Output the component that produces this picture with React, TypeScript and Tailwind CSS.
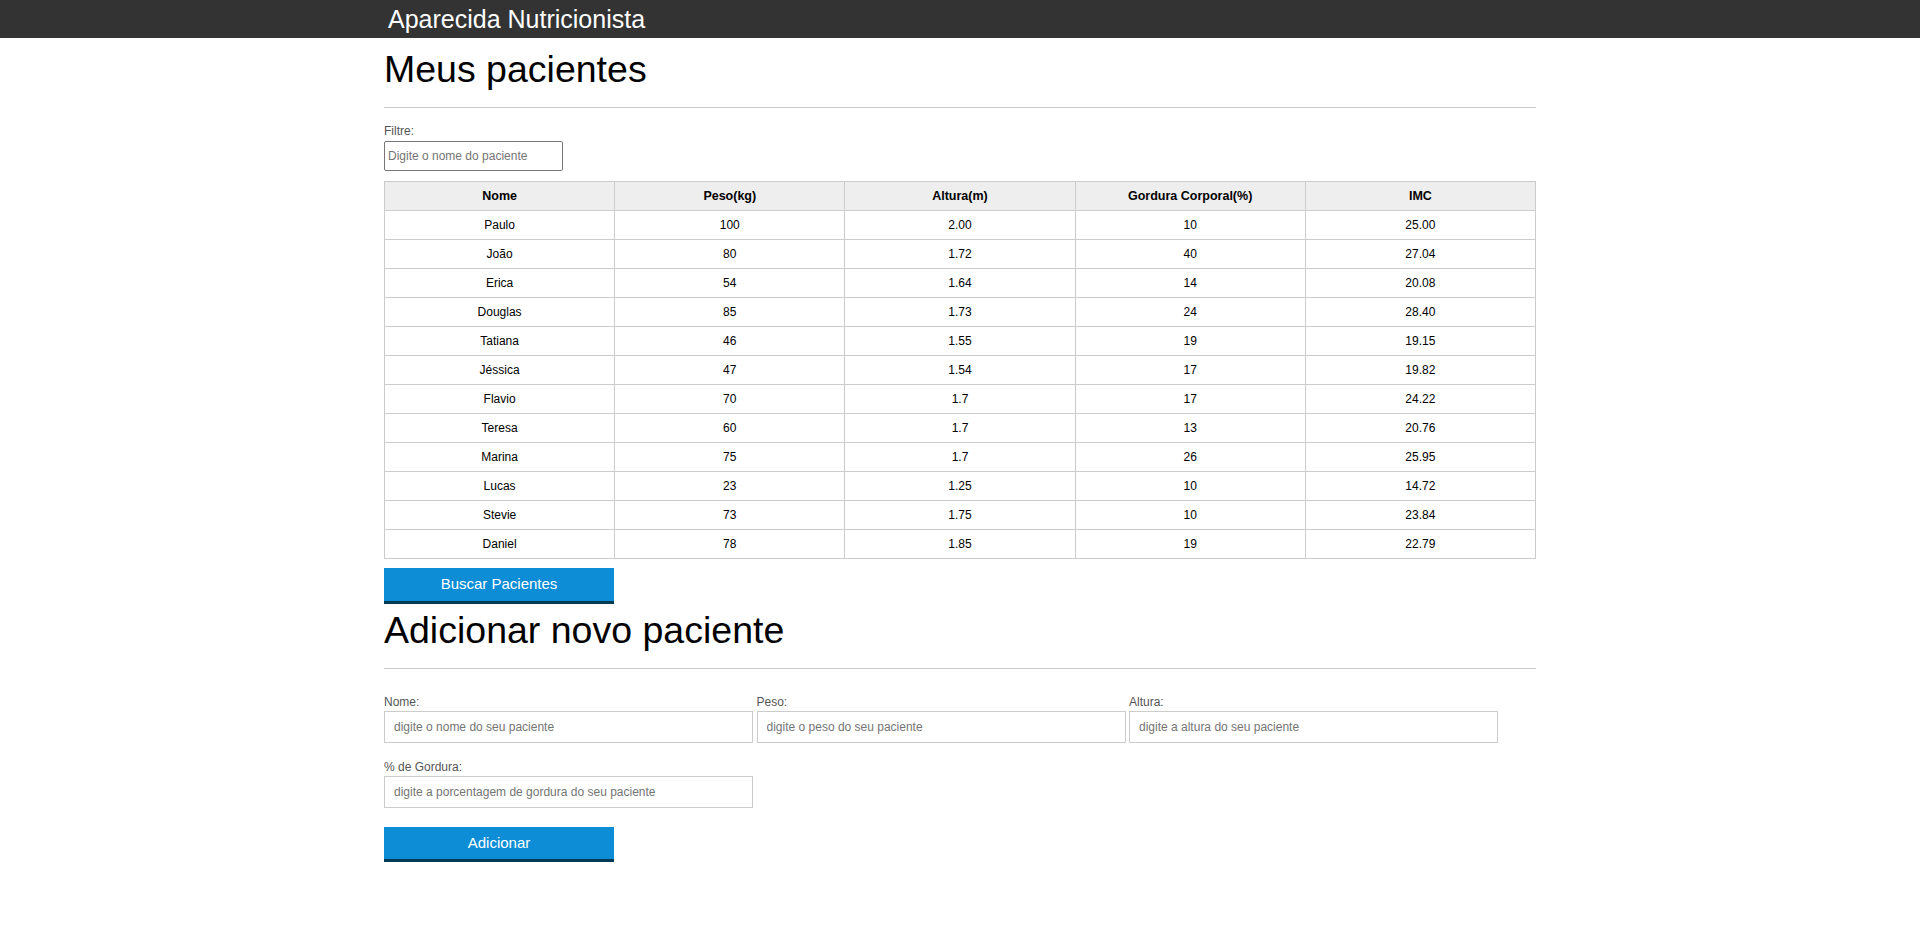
import React from "react";

const pacientes = [
  ["Paulo", "100", "2.00", "10", "25.00"],
  ["João", "80", "1.72", "40", "27.04"],
  ["Erica", "54", "1.64", "14", "20.08"],
  ["Douglas", "85", "1.73", "24", "28.40"],
  ["Tatiana", "46", "1.55", "19", "19.15"],
  ["Jéssica", "47", "1.54", "17", "19.82"],
  ["Flavio", "70", "1.7", "17", "24.22"],
  ["Teresa", "60", "1.7", "13", "20.76"],
  ["Marina", "75", "1.7", "26", "25.95"],
  ["Lucas", "23", "1.25", "10", "14.72"],
  ["Stevie", "73", "1.75", "10", "23.84"],
  ["Daniel", "78", "1.85", "19", "22.79"],
];

const headers = ["Nome", "Peso(kg)", "Altura(m)", "Gordura Corporal(%)", "IMC"];

function Field({ label, placeholder }: { label: string; placeholder: string }) {
  return (
    <div className="w-[369px] flex flex-col">
      <label className="text-[12px] leading-[14px] text-[#555] h-[16px]">{label}</label>
      <input
        className="h-[32px] w-full border border-[#ccc] bg-white px-[9px] text-[12px] text-black placeholder:text-[#757575] outline-none"
        placeholder={placeholder}
      />
    </div>
  );
}

export default function App() {
  return (
    <div className="min-h-[937px] bg-white text-black" style={{ fontFamily: '"Liberation Sans", Arial, sans-serif' }}>
      <header className="h-[38px] bg-[#333] flex items-center">
        <div className="w-[1152px] mx-auto pl-[4px]">
          <h1 className="text-white text-[25px] leading-[38px]">Aparecida Nutricionista</h1>
        </div>
      </header>
      <main className="w-[1152px] mx-auto">
        <section>
          <h2 className="text-[37.5px] leading-[44px] h-[44px] mt-[9px]">Meus pacientes</h2>
          <hr className="mt-[16px] border-0 border-t border-[#ccc]" />
          <div className="mt-[16px] flex flex-col">
            <label className="text-[12px] leading-[14px] text-[#555] h-[17px]">Filtre:</label>
            <input
              className="h-[30px] w-[179px] border border-[#767676] rounded-[2px] px-[3px] text-[12px] placeholder:text-[#757575] outline-none"
              placeholder="Digite o nome do paciente"
            />
          </div>
          <table className="mt-[10px] w-full border-collapse table-fixed text-[12px]">
            <thead>
              <tr className="bg-[#eee]">
                {headers.map((h) => (
                  <th key={h} className="border border-[#ccc] h-[29px] p-0 font-bold text-[12.5px] text-center">
                    {h}
                  </th>
                ))}
              </tr>
            </thead>
            <tbody>
              {pacientes.map((p) => (
                <tr key={p[0]}>
                  {p.map((c, i) => (
                    <td key={i} className="border border-[#ccc] h-[29px] p-0 text-center">
                      {c}
                    </td>
                  ))}
                </tr>
              ))}
            </tbody>
          </table>
          <button className="mt-[9px] w-[230px] h-[36px] bg-[#0c8dd5] border-b-[3px] border-[#013a55] text-white text-[15px]">
            Buscar Pacientes
          </button>
        </section>
        <section>
          <h2 className="text-[37.5px] leading-[44px] h-[44px] mt-[4px]">Adicionar novo paciente</h2>
          <hr className="mt-[16px] border-0 border-t border-[#ccc]" />
          <form className="mt-[26px]" onSubmit={(e) => e.preventDefault()}>
            <div className="flex gap-[3.5px]">
              <Field label="Nome:" placeholder="digite o nome do seu paciente" />
              <Field label="Peso:" placeholder="digite o peso do seu paciente" />
              <Field label="Altura:" placeholder="digite a altura do seu paciente" />
            </div>
            <div className="flex mt-[17px]">
              <Field label="% de Gordura:" placeholder="digite a porcentagem de gordura do seu paciente" />
            </div>
            <button className="mt-[19px] w-[230px] h-[35px] bg-[#0c8dd5] border-b-[3px] border-[#013a55] text-white text-[15px]">
              Adicionar
            </button>
          </form>
        </section>
      </main>
    </div>
  );
}
